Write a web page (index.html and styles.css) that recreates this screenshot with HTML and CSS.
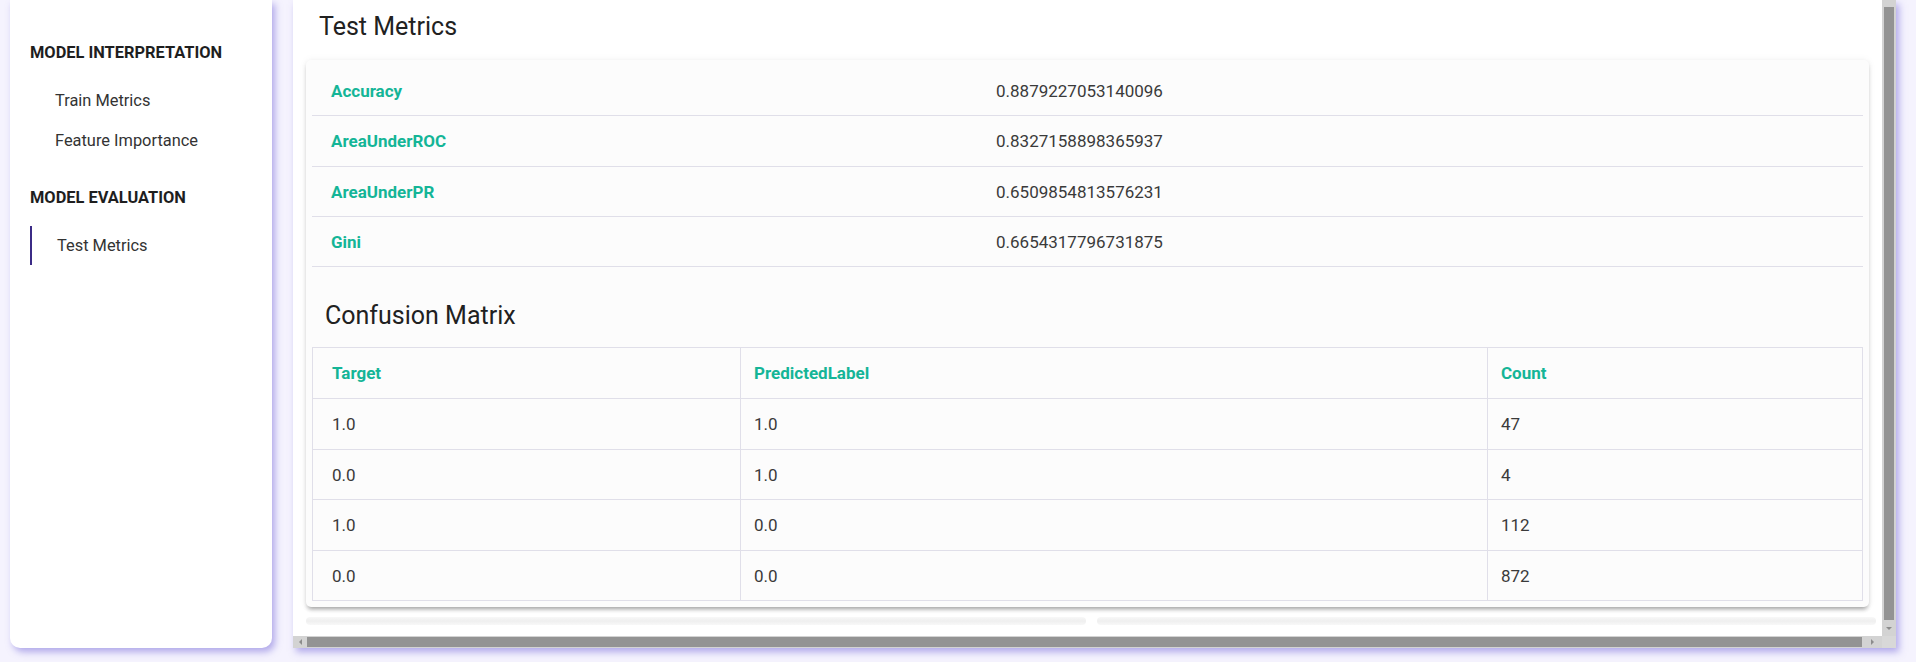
FILE: index.html
```html
<!DOCTYPE html>
<html lang="en">
<head>
<meta charset="utf-8">
<title>Test Metrics</title>
<link rel="stylesheet" href="styles.css">
</head>
<body>
<div class="layout">
  <aside class="sidebar">
    <nav class="nav">
      <div class="nav-group">
        <h3 class="nav-heading">MODEL INTERPRETATION</h3>
        <a class="nav-item">Train Metrics</a>
        <a class="nav-item">Feature Importance</a>
      </div>
      <div class="nav-group">
        <h3 class="nav-heading">MODEL EVALUATION</h3>
        <a class="nav-item active">Test Metrics</a>
      </div>
    </nav>
  </aside>
  <main class="panel">
    <div class="viewport">
      <h1 class="page-title">Test Metrics</h1>
      <section class="card">
        <table class="metrics">
          <colgroup><col class="metrics-key"><col></colgroup>
          <tbody>
            <tr><td class="label">Accuracy</td><td class="value">0.8879227053140096</td></tr>
            <tr><td class="label">AreaUnderROC</td><td class="value">0.8327158898365937</td></tr>
            <tr><td class="label">AreaUnderPR</td><td class="value">0.6509854813576231</td></tr>
            <tr><td class="label">Gini</td><td class="value">0.6654317796731875</td></tr>
          </tbody>
        </table>
        <h2 class="section-title">Confusion Matrix</h2>
        <table class="matrix">
          <colgroup><col class="c1"><col class="c2"><col></colgroup>
          <thead>
            <tr><th>Target</th><th>PredictedLabel</th><th>Count</th></tr>
          </thead>
          <tbody>
            <tr><td>1.0</td><td>1.0</td><td>47</td></tr>
            <tr><td>0.0</td><td>1.0</td><td>4</td></tr>
            <tr><td>1.0</td><td>0.0</td><td>112</td></tr>
            <tr><td>0.0</td><td>0.0</td><td>872</td></tr>
          </tbody>
        </table>
      </section>
      <div class="next-row">
        <div class="ghost"></div>
        <div class="ghost"></div>
      </div>
    </div>
    <div class="vscroll">
      <span class="vthumb"></span>
      <span class="vbtn"><span class="arrow-down"></span></span>
    </div>
    <div class="hscroll">
      <span class="hbtn"><span class="arrow-left"></span></span>
      <span class="hthumb"></span>
      <span class="hbtn hbtn-right"><span class="arrow-right"></span></span>
    </div>
    <div class="corner"></div>
  </main>
</div>
</body>
</html>
```
FILE: styles.css
```css
html, body {
  margin: 0;
  padding: 0;
}
body {
  background: #f5f3fe;
  font-family: Roboto, "Liberation Sans", sans-serif;
  color: #333;
  overflow: hidden;
}
.layout {
  display: flex;
  align-items: flex-start;
  gap: 21px;
  padding: 0 20px 0 10px;
  height: 662px;
  box-sizing: border-box;
}

/* Sidebar */
.sidebar {
  flex: 0 0 262px;
  height: 648px;
  background: #fff;
  border-radius: 0 0 10px 10px;
  box-shadow: 3px 4px 7px rgba(110, 95, 215, 0.5);
}
.nav {
  padding: 43px 0 0 20px;
}
.nav-group + .nav-group {
  margin-top: 27px;
}
.nav-heading {
  margin: 0 0 18px;
  font-size: 16.4px;
  line-height: 20px;
  font-weight: 700;
  color: #1e1e1e;
}
.nav-item {
  display: block;
  height: 40px;
  line-height: 40px;
  padding-left: 25px;
  font-size: 16.4px;
  color: #333;
}
.nav-item.active {
  border-left: 2px solid #3b2b86;
  height: 39px;
  line-height: 39px;
  margin-top: 1px;
}

/* Main panel */
.panel {
  flex: 0 0 1603px;
  height: 648px;
  background: #fff;
  display: grid;
  grid-template-columns: 1fr 14px;
  grid-template-rows: 636px 12px;
  box-shadow: 3px 4px 7px rgba(110, 95, 215, 0.5);
}
.viewport {
  overflow: hidden;
  padding: 11px 13px 0 13px;
}
.page-title {
  margin: 0 0 17px 13px;
  font-size: 25px;
  line-height: 32px;
  font-weight: 400;
  color: #212121;
}
.card {
  background: #fcfcfc;
  border-radius: 5px;
  padding: 6px;
  box-shadow: 0 4px 4px -2px rgba(0, 0, 0, 0.3), 0 2px 5px rgba(0, 0, 0, 0.08), 0 0 8px rgba(0, 0, 0, 0.05);
}

.metrics {
  width: 100%;
  border-collapse: separate;
  border-spacing: 0;
  table-layout: fixed;
}
.metrics-key {
  width: 684px;
}
.metrics td {
  padding: 1px 0 0;
  line-height: 48.33px;
  border-bottom: 1px solid #e0dfe9;
  font-size: 17px;
  white-space: nowrap;
}
.metrics .label {
  padding-left: 19px;
  font-weight: 700;
  color: #14b597;
}
.metrics .value {
  color: #3a3a3a;
}

.section-title {
  margin: 33px 0 15px 13px;
  font-size: 25px;
  line-height: 32px;
  font-weight: 400;
  color: #212121;
}

.matrix {
  width: 100%;
  border-collapse: separate;
  border-spacing: 0;
  table-layout: fixed;
  border-top: 1px solid #e0dfe9;
  border-left: 1px solid #e0dfe9;
}
.matrix .c1 { width: 428px; }
.matrix .c2 { width: 747px; }
.matrix th,
.matrix td {
  padding: 1px 0 0 13px;
  line-height: 48.6px;
  text-align: left;
  font-size: 17px;
  border-right: 1px solid #e0dfe9;
  border-bottom: 1px solid #e0dfe9;
  white-space: nowrap;
}
.matrix th:first-child,
.matrix td:first-child {
  padding-left: 19px;
}
.matrix th {
  font-weight: 700;
  color: #14b597;
}
.matrix td {
  color: #3a3a3a;
}

.next-row {
  display: flex;
  gap: 11px;
  margin: 10px -7px 0 0;
  height: 8px;
}
.ghost {
  flex: 1;
  border-radius: 4px;
  background: linear-gradient(to bottom, #f8f8f8, #efefef 50%, #f8f8f8);
}

/* Scrollbars */
.vscroll {
  background: #d3d3d3;
  display: flex;
  flex-direction: column;
  padding: 7px 2px 0;
}
.vthumb {
  flex: 0 0 613px;
  background: #939393;
}
.vbtn {
  flex: 1;
  display: flex;
  align-items: center;
  justify-content: center;
}
.arrow-down {
  width: 0;
  height: 0;
  border-left: 3px solid transparent;
  border-right: 3px solid transparent;
  border-top: 3px solid #8c8c8c;
}
.hscroll {
  background: #d3d3d3;
  display: flex;
  align-items: stretch;
  padding: 1px 0;
}
.hbtn {
  flex: 0 0 14px;
  display: flex;
  align-items: center;
  justify-content: center;
}
.hbtn-right {
  flex: 1;
}
.hthumb {
  flex: 0 0 1555px;
  background: #939393;
}
.arrow-left {
  width: 0;
  height: 0;
  border-top: 3px solid transparent;
  border-bottom: 3px solid transparent;
  border-right: 3px solid #8c8c8c;
}
.arrow-right {
  width: 0;
  height: 0;
  border-top: 3px solid transparent;
  border-bottom: 3px solid transparent;
  border-left: 3px solid #8c8c8c;
}
.corner {
  background: #d8d8d8;
}
```
